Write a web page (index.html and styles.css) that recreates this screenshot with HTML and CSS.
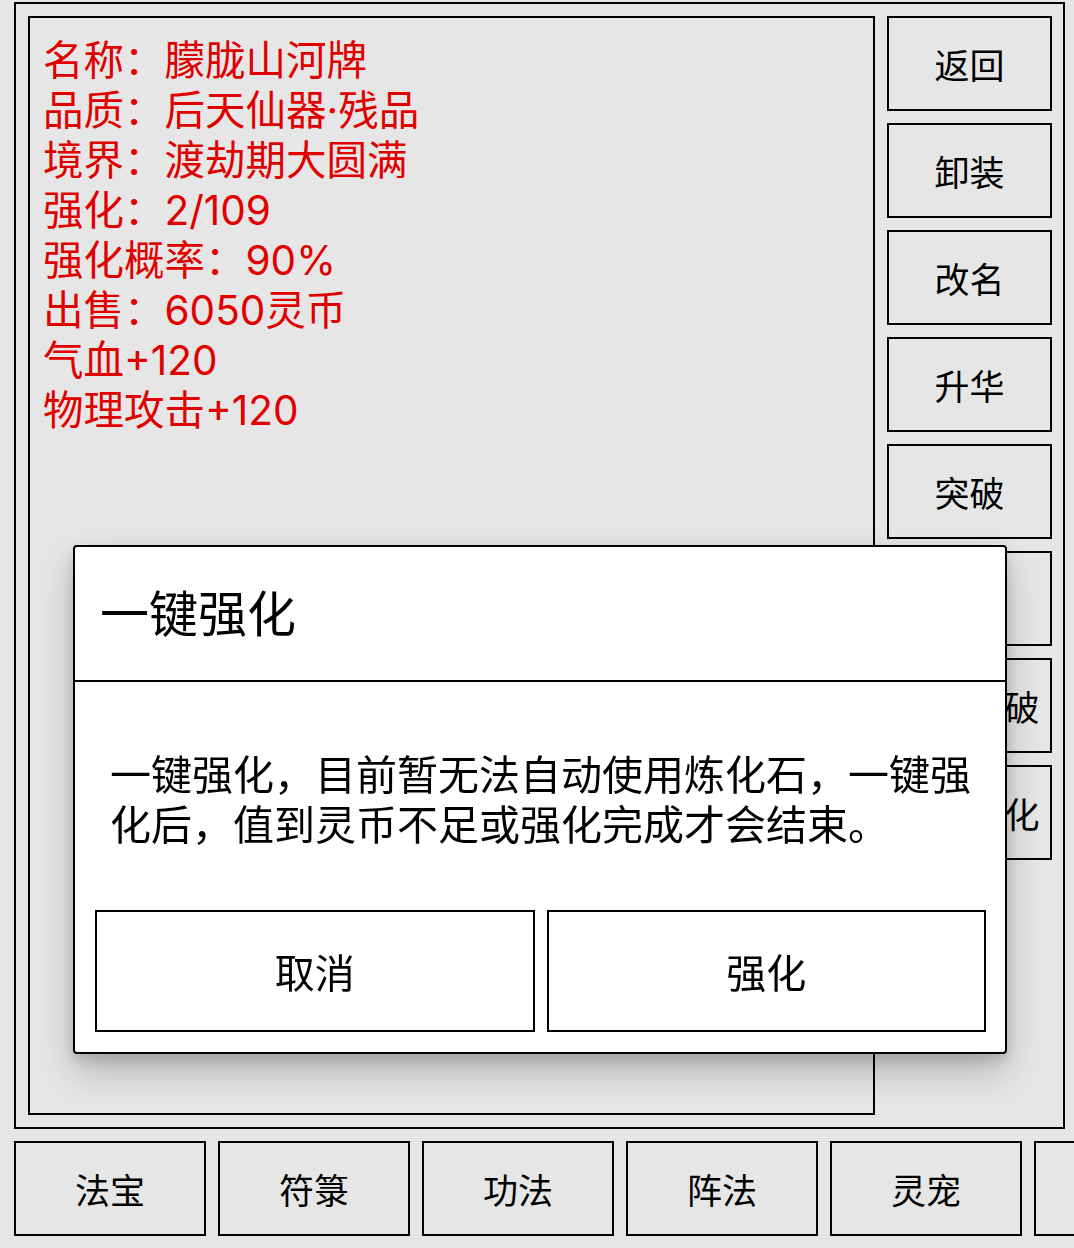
FILE: index.html
```html
<!DOCTYPE html>
<html lang="zh-CN">
<head>
<meta charset="utf-8">
<title>法宝详情</title>
<link rel="stylesheet" href="styles.css">
</head>
<body>
<div class="frame">
  <div class="info">
    <div class="line">名称：朦胧山河牌</div>
    <div class="line">品质：后天仙器·残品</div>
    <div class="line">境界：渡劫期大圆满</div>
    <div class="line">强化：2/109</div>
    <div class="line">强化概率：90%</div>
    <div class="line">出售：6050灵币</div>
    <div class="line">气血+120</div>
    <div class="line">物理攻击+120</div>
  </div>
  <div class="actions">
    <div class="btn">返回</div>
    <div class="btn">卸装</div>
    <div class="btn">改名</div>
    <div class="btn">升华</div>
    <div class="btn">突破</div>
    <div class="btn">强化</div>
    <div class="btn">一键突破</div>
    <div class="btn">一键强化</div>
  </div>
</div>
<div class="tabs">
  <div class="tab">法宝</div>
  <div class="tab">符箓</div>
  <div class="tab">功法</div>
  <div class="tab">阵法</div>
  <div class="tab">灵宠</div>
  <div class="tab">丹药</div>
</div>

<div class="dialog">
  <div class="dialog-head">一键强化</div>
  <div class="dialog-body">
    <p class="dialog-text">一键强化，目前暂无法自动使用炼化石，一键强化后，值到灵币不足或强化完成才会结束。</p>
    <div class="dialog-buttons">
      <div class="dbtn">取消</div>
      <div class="dbtn">强化</div>
    </div>
  </div>
</div>
</body>
</html>
```

FILE: styles.css
```css
html, body {
  margin: 0;
  padding: 0;
}
body {
  background: #e6e6e6;
  font-family: Inter, "Noto Sans CJK SC", sans-serif;
  color: #000;
  width: 1074px;
  height: 1248px;
  overflow: hidden;
}
.frame {
  box-sizing: border-box;
  margin: 2px 0 0 14px;
  width: 1051px;
  height: 1127px;
  border: 2px solid #000;
  padding: 12px 11px 12px 12px;
  display: flex;
  gap: 12px;
}
.info {
  box-sizing: border-box;
  flex: 0 0 847px;
  border: 2px solid #000;
  padding: 18px 13px;
  color: #e00000;
  font-size: 40.5px;
  line-height: 50px;
}
.actions {
  flex: 1;
  display: flex;
  flex-direction: column;
  gap: 12px;
}
.btn {
  box-sizing: border-box;
  height: 95px;
  border: 2px solid #000;
  display: flex;
  align-items: center;
  justify-content: center;
  font-size: 35px;
  white-space: nowrap;
  overflow: hidden;
}
.tabs {
  display: flex;
  gap: 12px;
  margin: 12px 0 0 14px;
  overflow: hidden;
}
.tab {
  box-sizing: border-box;
  flex: 0 0 192px;
  height: 95px;
  border: 2px solid #000;
  display: flex;
  align-items: center;
  justify-content: center;
  font-size: 35px;
}
.dialog {
  position: fixed;
  left: 73px;
  top: 545px;
  width: 934px;
  box-sizing: border-box;
  background: #fff;
  border: 2px solid #000;
  border-radius: 4px;
  box-shadow: 0 18px 36px rgba(0, 0, 0, 0.22), 0 6px 14px rgba(0, 0, 0, 0.14);
}
.dialog-head {
  box-sizing: border-box;
  height: 135px;
  border-bottom: 2px solid #000;
  display: flex;
  align-items: center;
  padding: 0 0 6px 25px;
  font-size: 49px;
}
.dialog-body {
  padding: 68px 19px 20px 20px;
}
.dialog-text {
  margin: 0 6px 60px 15px;
  font-size: 41px;
  line-height: 50px;
}
.dialog-buttons {
  display: grid;
  grid-template-columns: 1fr 1fr;
  gap: 12px;
}
.dbtn {
  box-sizing: border-box;
  height: 122px;
  border: 2px solid #000;
  display: flex;
  align-items: center;
  justify-content: center;
  font-size: 40px;
}
```
